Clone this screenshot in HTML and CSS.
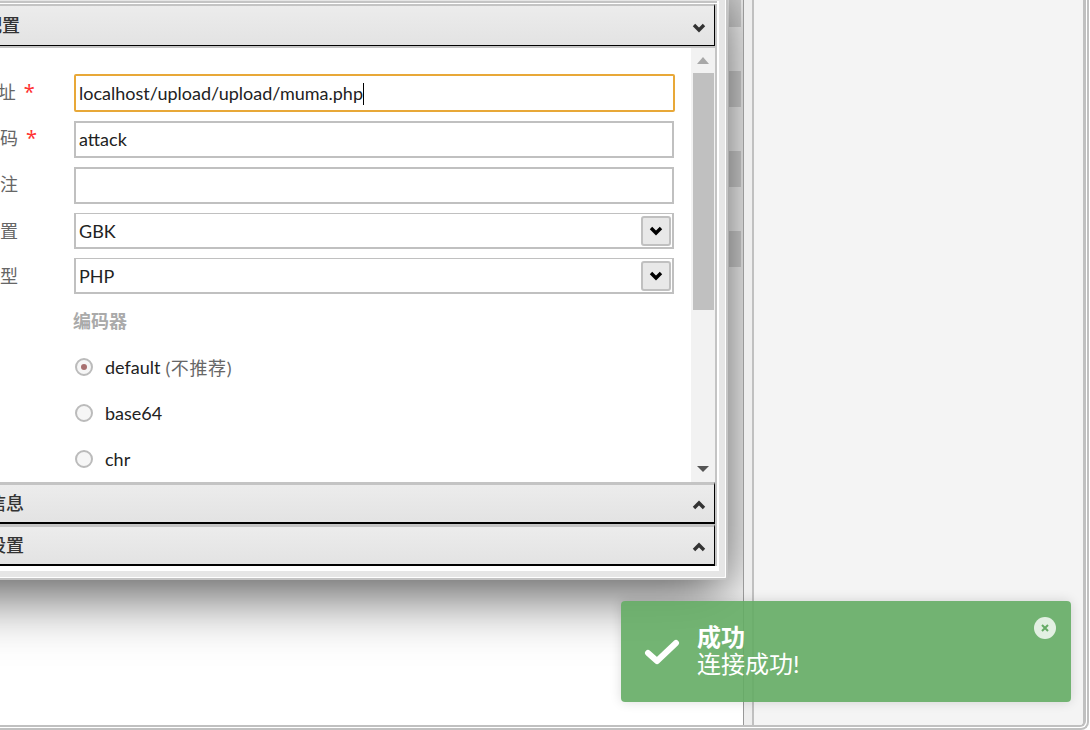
FILE: index.html
```html
<!DOCTYPE html>
<html lang="zh-CN">
<head>
<meta charset="utf-8">
<title>添加数据</title>
<link rel="stylesheet" href="styles.css">
</head>
<body>
<div class="page">
  <div class="outer">
    <div class="main">
      <div class="left">
        <div class="bars"><i></i><i></i><i></i><i></i></div>
        <div class="dialog">
          <div class="inner">
            <div class="rule"></div>
            <div class="acc">
              <div class="head open"><span>基础配置</span>
                <svg class="chev" viewBox="0 0 14 10"><path d="M2 2 L7 7 L12 2"/></svg>
              </div>
              <div class="body">
                <div class="form">
                  <div class="row r38"><label>URL地址<b>*</b></label><div class="field focus">localhost/upload/upload/muma.php<span class="caret"></span></div></div>
                  <div class="row"><label>连接密码<b>*</b></label><input class="field" value="attack"></div>
                  <div class="row"><label>网站备注</label><input class="field" value=""></div>
                  <div class="row s"><label>编码设置</label><div class="field sel">GBK<span class="btn"><svg class="chev dark" viewBox="0 0 14 10"><path d="M2 2 L7 7 L12 2"/></svg></span></div></div>
                  <div class="row s"><label>连接类型</label><div class="field sel">PHP<span class="btn"><svg class="chev dark" viewBox="0 0 14 10"><path d="M2 2 L7 7 L12 2"/></svg></span></div></div>
                  <div class="legend">编码器</div>
                  <div class="radio"><span class="dot on"></span>default <em>(不推荐)</em></div>
                  <div class="radio"><span class="dot"></span>base64</div>
                  <div class="radio"><span class="dot"></span>chr</div>
                </div>
                <div class="scroll">
                  <div class="arrow up"></div>
                  <div class="thumb"></div>
                  <div class="arrow down"></div>
                </div>
              </div>
              <div class="head closed"><span>请求信息</span>
                <svg class="chev" viewBox="0 0 14 10"><path d="M2 8 L7 3 L12 8"/></svg>
              </div>
              <div class="head closed"><span>其他设置</span>
                <svg class="chev" viewBox="0 0 14 10"><path d="M2 8 L7 3 L12 8"/></svg>
              </div>
            </div>
          </div>
        </div>
      </div>
      <div class="gutter"></div>
      <div class="right"></div>
    </div>
  </div>
  <div class="toast">
    <svg class="check" viewBox="0 0 36 30"><path d="M4 16 L13 24 L32 6"/></svg>
    <div class="msg">
      <div class="title">成功</div>
      <div class="text">连接成功!</div>
    </div>
    <span class="close"><svg viewBox="0 0 10 10"><path d="M2 2 L8 8 M8 2 L2 8"/></svg></span>
  </div>
</div>
</body>
</html>
```
FILE: styles.css
```css
* { box-sizing: border-box; }
html, body { margin: 0; padding: 0; }
body { background: #fff; font-family: Lato, "Noto Sans CJK SC", sans-serif; font-size: 18px; color: #222; }
.page { position: relative; width: 1090px; height: 730px; overflow: hidden; background: #fff; }
.outer { width: 1089px; height: 730px; border-right: 2px solid #c0c0c0; border-bottom: 2px solid #c0c0c0; border-bottom-right-radius: 8px; }
.main { display: flex; width: 1086px; height: 727px; border-right: 3px solid #c0c0c0; border-bottom: 2px solid #c0c0c0; border-bottom-right-radius: 6px; overflow: hidden; }
.left { position: relative; width: 744px; flex: none; border-right: 1px solid #999; overflow: hidden; background: #fff; }
.bars { display: flex; flex-direction: column; gap: 44px; padding-left: 729px; margin-top: -9px; }
.bars i { display: block; width: 12px; height: 36px; background: #dcdcdc; }
.gutter { width: 10px; flex: none; background: #eee; border-right: 2px solid #c0c0c0; }
.right { flex: 1; background: #f4f4f4; }

.dialog { position: absolute; left: -90px; top: -20px; width: 818px; height: 600px; padding: 20px 7px 8px; background: #e6e6e6; border: 2px solid #c4c4c4; border-top: 0; border-radius: 0 0 3px 0; box-shadow: inset -1px -1px 0 #fff, 0 14px 60px rgba(0, 0, 0, .68); }
.inner { height: 100%; padding: 0 2px 3px 0; background: #fff; }
.rule { height: 2px; margin: 1px 0; background: #c4c4c4; }
.acc { border-right: 2px solid #c4c4c4; }
.head { display: flex; align-items: center; justify-content: space-between; padding: 0 8px 0 33px; background: linear-gradient(#ececec, #e3e3e3); color: #333; border-right: 1px solid #000; box-sizing: content-box; background-clip: padding-box; }
.head.open { height: 39px; padding-left: 29px; border-top: 2px solid #c4c4c4; border-bottom: 1px solid #000; }
.head.closed { height: 37px; border-top: 3px solid #c4c4c4; border-bottom: 2px solid #000; }
.head span { white-space: nowrap; margin-top: -3px; font-weight: 500; }
.head .chev { margin-top: 2px; }
.head.open .chev { margin-top: 4px; }
.chev { width: 14px; height: 10px; fill: none; stroke: #333; stroke-width: 3.4; }
.chev.dark { stroke: #000; }

.body { display: flex; height: 436px; border-top: 2px solid #c4c4c4; }
.form { flex: 1; min-width: 0; padding: 26px 17px 0 27px; overflow: hidden; }
.row { display: flex; align-items: center; height: 37px; margin-bottom: 9px; color: #666; }
.row.r38 { height: 38px; }
.row.s { height: 36px; }
.row label { width: 128px; flex: none; white-space: nowrap; padding-bottom: 5px; }
.row.s label { padding-bottom: 3px; }
.row label b { margin-left: 8px; color: #f33; font-family: "Noto Sans", sans-serif; font-size: 20px; font-weight: 400; line-height: 1; }
.field { display: block; flex: 1; min-width: 0; height: 100%; padding: 0 3px; border: 2px solid #c0c0c0; background: #fff; color: #222; font: inherit; line-height: 34px; outline: 0; }
input.field { padding-bottom: 2px; }
.field.focus { border-color: #e8a838; border-radius: 2px; margin-right: -1px; }
.caret { display: inline-block; width: 1px; height: 22px; vertical-align: -5px; background: #000; }
.sel { position: relative; display: flex; align-items: center; border-top-width: 1px; }
.btn { display: flex; align-items: center; justify-content: center; position: absolute; right: 1px; top: 2px; width: 30px; height: 30px; border: 2px solid #c0c0c0; border-radius: 3px; background: #e8e8e8; }
.legend { height: 20px; margin: 17px 0 13px 127px; color: #aaa; font-weight: 700; line-height: 20px; }
.radio { display: flex; align-items: center; height: 46px; margin-left: 129px; color: #222; white-space: nowrap; }
.radio em { margin-left: 5px; font-style: normal; color: #666; letter-spacing: .6px; }
.dot { display: flex; align-items: center; justify-content: center; width: 18px; height: 18px; margin-right: 12px; border: 2px solid #bbb; border-radius: 50%; background: #f6f6f6; }
.dot.on::after { content: ""; width: 6px; height: 6px; border-radius: 50%; background: #a87070; }

.scroll { display: flex; flex-direction: column; width: 24px; flex: none; background: #f2f2f2; }
.thumb { height: 237px; margin: 0 1px 0 2px; background: #c0c0c0; }
.arrow { flex: none; width: 0; height: 0; align-self: center; border-left: 6px solid transparent; border-right: 6px solid transparent; }
.arrow.up { margin: 9px 0 9px; border-bottom: 7px solid #a8a8a8; }
.arrow.down { margin-top: 156px; border-top: 6px solid #555; }

.toast { position: absolute; left: 621px; top: 601px; display: flex; align-items: flex-start; width: 450px; height: 101px; padding: 22px 0 0 23px; border-radius: 4px; background: rgba(100, 172, 100, .9); color: #fff; box-shadow: 0 0 12px rgba(0, 0, 0, .14); }
.check { width: 36px; height: 30px; margin: 14px 17px 0 0; flex: none; fill: none; stroke: #fff; stroke-width: 6; stroke-linecap: round; stroke-linejoin: round; }
.msg { line-height: 27px; font-size: 24px; }
.title { font-weight: 700; }
.close { position: absolute; right: 15px; top: 16px; display: flex; width: 22px; height: 22px; padding: 6px; border-radius: 50%; background: rgba(255, 255, 255, .8); }
.close svg { fill: none; stroke: #66ab66; stroke-width: 2; }
```
